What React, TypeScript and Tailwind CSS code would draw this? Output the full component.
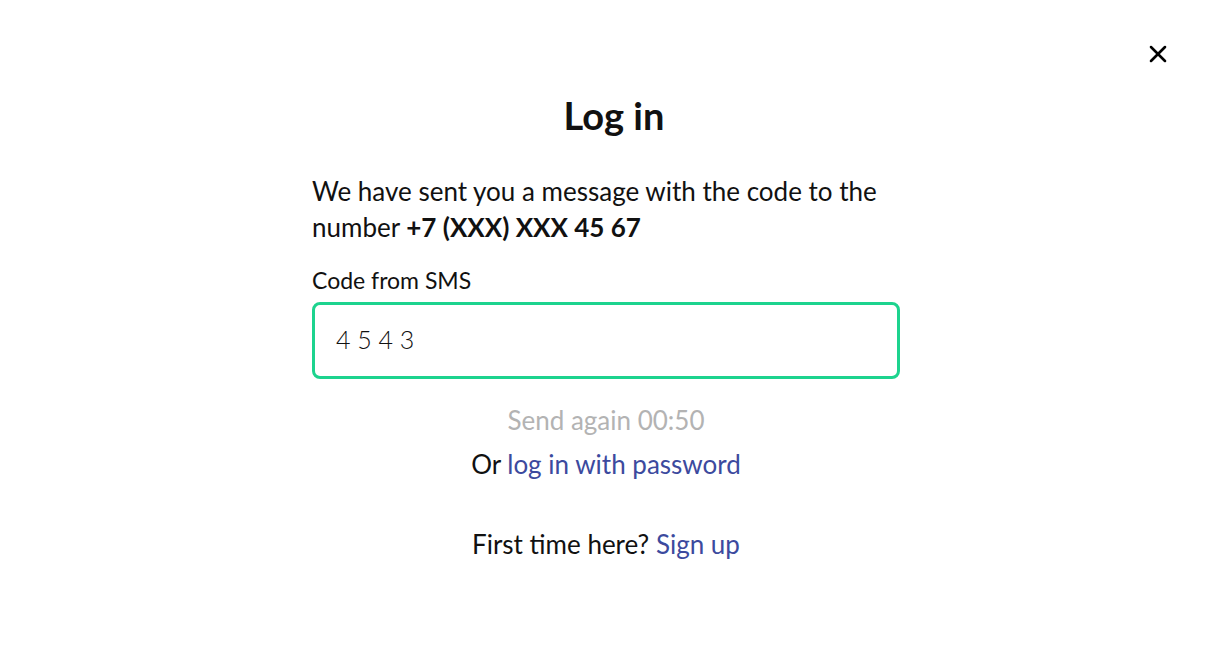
import { X } from "lucide-react"

export default function App() {
    return (
        <div className="relative w-full min-h-[665px] bg-white text-[#111] font-['Lato','Noto_Sans',sans-serif]">
            <button className="absolute top-[40px] right-[40px] w-[28px] h-[28px] flex items-center justify-center text-black" aria-label="Close">
                <X className="w-[30px] h-[30px]" strokeWidth={2.2} />
            </button>

            <div className="mx-auto w-[588px] pt-[88px] flex flex-col">
                <h1 className="text-center pl-[16px] text-[38px] leading-[54px] font-bold">Log in</h1>

                <p className="mt-[31px] text-[26px] leading-[36px]">
                    We have sent you a message with the code to the number <b className="font-bold">+7 (XXX) XXX 45 67</b>
                </p>

                <label className="mt-[20px] text-[23px] leading-[30px]">Code from SMS</label>
                <div className="mt-[7px] h-[77px] rounded-[8px] border-[3px] border-[#1dd38e] flex items-center px-[21px]">
                    <span className="text-[25px] font-light leading-none -mt-[2px]">4 5 4 3</span>
                </div>

                <p className="mt-[23px] text-center text-[26px] leading-[36px] text-[#b3b3b3]">Send again 00:50</p>
                <p className="mt-[8px] text-center text-[26px] leading-[36px]">
                    Or <a href="#" className="text-[#3c4a9e]">log in with password</a>
                </p>
                <p className="mt-[44px] text-center text-[26px] leading-[36px]">
                    First time here? <a href="#" className="text-[#3c4a9e]">Sign up</a>
                </p>
            </div>
        </div>
    )
}
